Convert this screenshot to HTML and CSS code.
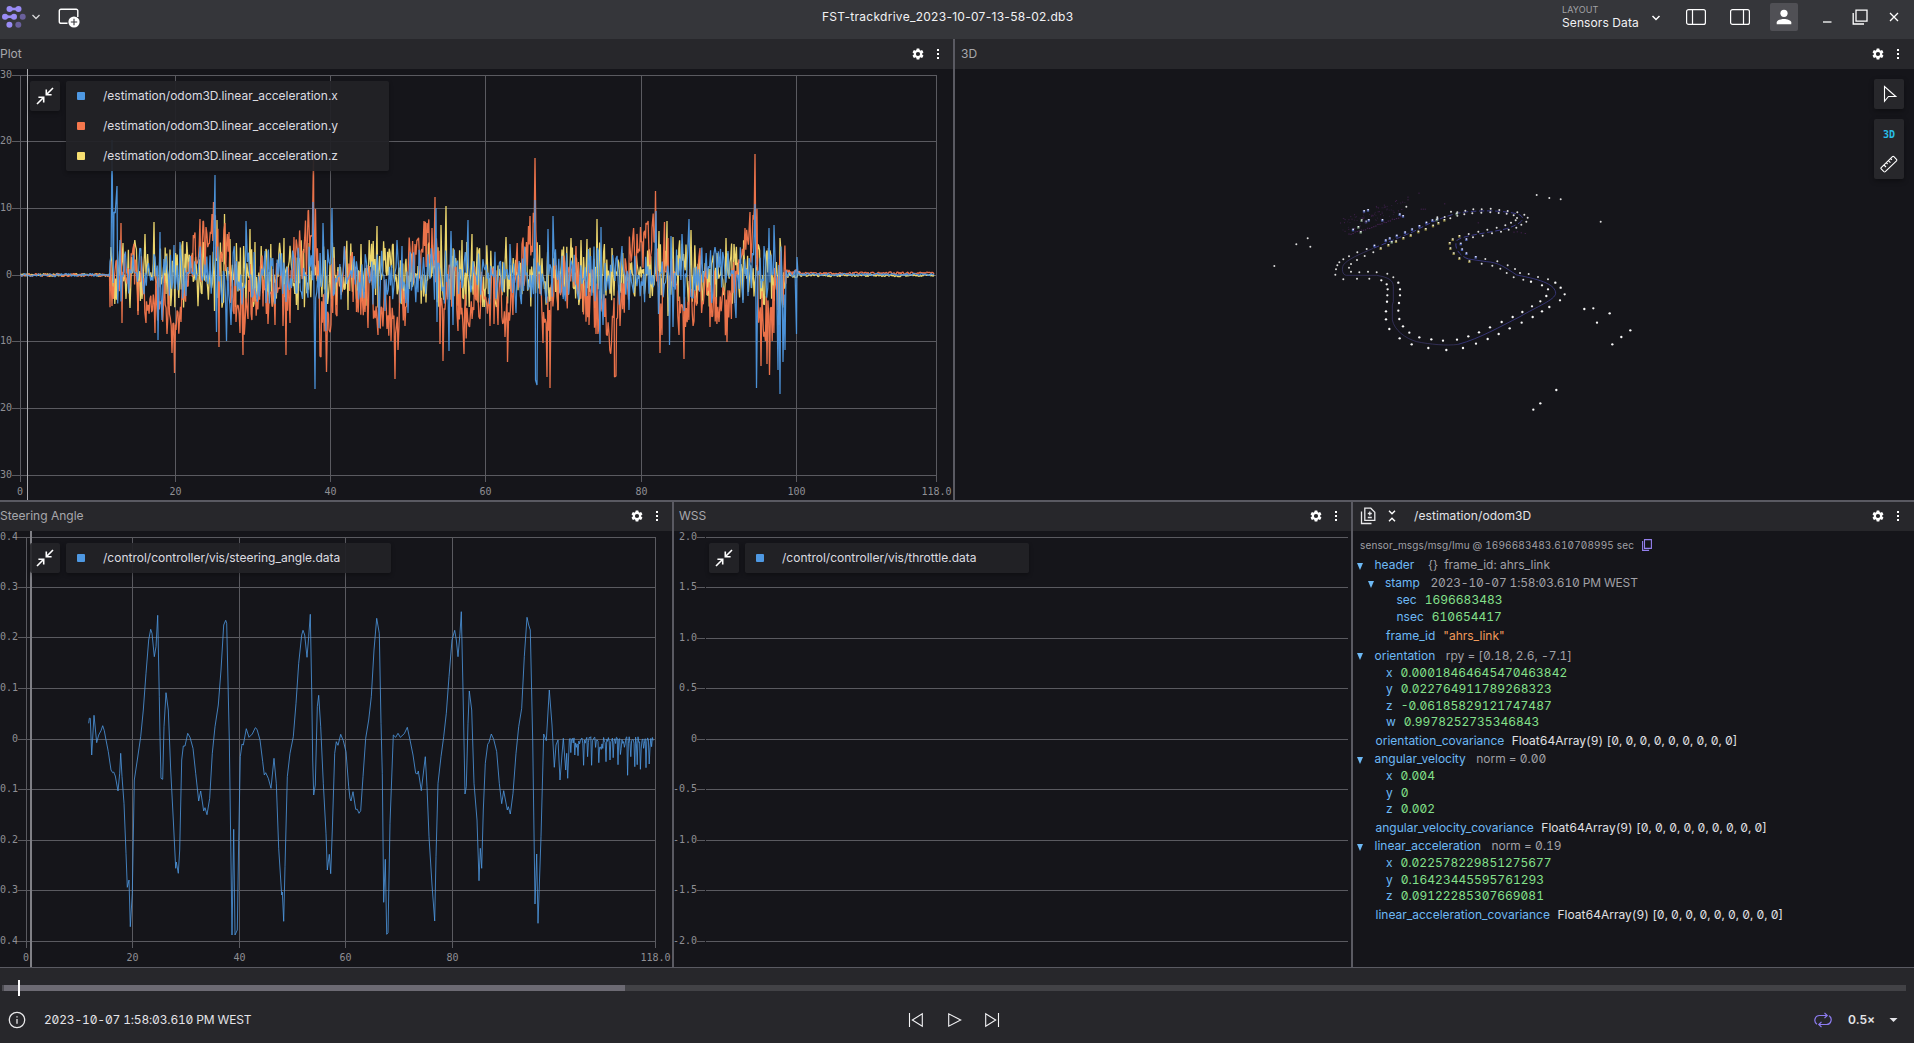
FILE: index.html
```html
<!DOCTYPE html>
<html lang="en">
<head>
<meta charset="utf-8">
<title>FST-trackdrive_2023-10-07-13-58-02.db3</title>
<link rel="stylesheet" href="styles.css">
</head>
<body>
<svg class="defs" aria-hidden="true">
  <symbol id="gear" viewBox="0 0 24 24"><path fill="currentColor" fill-rule="evenodd" d="M19.14 12.94c.04-.3.06-.61.06-.94s-.02-.64-.07-.94l2.03-1.58a.49.49 0 0 0 .12-.61l-1.92-3.32a.49.49 0 0 0-.59-.22l-2.39.96c-.5-.38-1.03-.7-1.62-.94l-.36-2.54a.48.48 0 0 0-.48-.41h-3.84a.47.47 0 0 0-.47.41l-.36 2.54c-.59.24-1.13.57-1.62.94l-2.39-.96a.48.48 0 0 0-.59.22L2.74 8.87a.48.48 0 0 0 .12.61l2.03 1.58c-.05.3-.09.63-.09.94s.02.64.07.94l-2.03 1.58a.49.49 0 0 0-.12.61l1.92 3.32c.12.22.37.29.59.22l2.39-.96c.5.38 1.03.7 1.62.94l.36 2.54c.05.24.24.41.48.41h3.84c.24 0 .44-.17.47-.41l.36-2.54c.59-.24 1.13-.56 1.62-.94l2.39.96c.22.08.47 0 .59-.22l1.92-3.32a.48.48 0 0 0-.12-.61zM12 15.6a3.6 3.6 0 1 1 0-7.2 3.6 3.6 0 0 1 0 7.2z"/></symbol>
  <symbol id="dots" viewBox="0 0 14 14"><path fill="currentColor" d="M6 2h2v2H6zM6 6h2v2H6zM6 10h2v2H6z"/></symbol>
  <symbol id="shrink" viewBox="0 0 18 18"><path fill="none" stroke="currentColor" stroke-width="1.6" d="M17 1l-6.500 6.500M10.300 2.600v5.100h5.300M1 17l6.500-6.500M2.400 10.300h5.300v5.300"/></symbol>
</svg>

<div class="app">
  <header class="appbar">
    <svg class="logo" viewBox="0 0 26 24">
      <g fill="#6a609c"><circle cx="22.700" cy="11.800" r="3"/><circle cx="18.300" cy="19.800" r="3"/></g>
      <g fill="#9a8cf5"><circle cx="9.500" cy="4" r="3"/><circle cx="18.500" cy="4" r="3"/><path d="M9.500 1.500q4.500 2.500 9 0v5q-4.500-2.500-9 0z"/><circle cx="5" cy="11.800" r="3"/><circle cx="14" cy="11.800" r="3"/><path d="M5 9.300q4.500 2.500 9 0v5q-4.500-2.500-9 0z"/><circle cx="9.400" cy="19.800" r="3"/></g>
    </svg>
    <svg class="chev logo-chev" viewBox="0 0 10 8"><path d="M1.500 2l3.500 3.500L8.500 2"/></svg>
    <svg class="add-panel" viewBox="0 0 22 20"><path d="M9.500 15.300H3A1.600 1.600 0 0 1 1.300 13.700V2.800A1.600 1.600 0 0 1 2.900 1.200h15.300a1.600 1.600 0 0 1 1.600 1.600V9" fill="none" stroke="#fff" stroke-width="1.400"/><circle cx="16" cy="14" r="5.600" fill="#fff"/><path d="M16 10.800v6.400M12.800 14h6.400" stroke="#35363a" stroke-width="1.100"/></svg>
    <h1 class="title">FST-trackdrive_2023-10-07-13-58-02.db3</h1>
    <div class="layout-menu"><small>LAYOUT</small><span>Sensors Data</span></div>
    <svg class="chev layout-chev" viewBox="0 0 10 8"><path d="M1.500 2l3.500 3.500L8.500 2"/></svg>
    <svg class="side-left" viewBox="0 0 20 16"><rect x=".6" y=".6" width="18.800" height="14.800" rx="2"/><path d="M6.500 .6v14.800"/></svg>
    <svg class="side-right" viewBox="0 0 20 16"><rect x=".6" y=".6" width="18.800" height="14.800" rx="2"/><path d="M13.500 .6v14.800"/></svg>
    <div class="avatar"><svg viewBox="0 0 16 16"><circle cx="8" cy="4.300" r="3.600"/><path d="M.7 15.200v-1.700C.7 11.200 5 10 8 10s7.300 1.200 7.300 3.500v1.700z"/></svg></div>
    <svg class="win win-min" viewBox="0 0 16 16"><path d="M4 13h8.500"/></svg>
    <svg class="win win-max" viewBox="0 0 16 16"><path d="M4 1.200h11v11H4zM1.200 4v11H12"/></svg>
    <svg class="win win-close" viewBox="0 0 16 16"><path d="M4 4l8 8M12 4l-8 8"/></svg>
  </header>

  <main class="mosaic">
    <div class="row row-top">
      <section class="panel plot-panel">
        <div class="toolbar"><h2>Plot</h2><svg class="tool"><use href="#gear"/></svg><svg class="tool"><use href="#dots"/></svg></div>
        <div class="body">
          <svg class="chart" id="accel" viewBox="0 69 953 431"></svg>
          <div class="overlay">
            <button class="shrink"><svg><use href="#shrink"/></svg></button>
            <ul class="legend legend-accel">
              <li><i class="blue"></i>/estimation/odom3D.linear_acceleration.x</li>
              <li><i class="orange"></i>/estimation/odom3D.linear_acceleration.y</li>
              <li><i class="yellow"></i>/estimation/odom3D.linear_acceleration.z</li>
            </ul>
          </div>
        </div>
      </section>
      <section class="panel scene-panel">
        <div class="toolbar padded"><h2>3D</h2><svg class="tool"><use href="#gear"/></svg><svg class="tool"><use href="#dots"/></svg></div>
        <div class="body">
          <svg class="chart" id="scene" viewBox="955 69 959 431"></svg>
          <div class="scene-tools">
            <button class="chip"><svg viewBox="0 0 18 18"><path d="M4.500 1.500v14.800l4-4.800h7.300z"/></svg></button>
            <div class="chip-group">
              <button class="mode">3D</button>
              <button><svg viewBox="0 0 18 18"><path d="M1.200 12.600L12.400 1.700q.8-.6 1.500 0l2.600 2.700q.6.7 0 1.400L5.300 16.700q-.7.6-1.400 0L1.200 14q-.6-.7 0-1.400zM4 10l2 2M6.300 7.700L7.600 9M8.400 5.600l2 2M10.600 3.500l1.300 1.300"/></svg></button>
            </div>
          </div>
        </div>
      </section>
    </div>

    <div class="row row-bottom">
      <section class="panel steer-panel">
        <div class="toolbar"><h2>Steering Angle</h2><svg class="tool"><use href="#gear"/></svg><svg class="tool"><use href="#dots"/></svg></div>
        <div class="body">
          <svg class="chart" id="steer" viewBox="0 531 672 436"></svg>
          <div class="overlay">
            <button class="shrink"><svg><use href="#shrink"/></svg></button>
            <ul class="legend legend-steer"><li><i class="blue"></i>/control/controller/vis/steering_angle.data</li></ul>
          </div>
        </div>
      </section>
      <section class="panel wss-panel">
        <div class="toolbar padded"><h2>WSS</h2><svg class="tool"><use href="#gear"/></svg><svg class="tool"><use href="#dots"/></svg></div>
        <div class="body">
          <svg class="chart" id="wss" viewBox="674 531 677 436"></svg>
          <div class="overlay overlay-wss">
            <button class="shrink"><svg><use href="#shrink"/></svg></button>
            <ul class="legend legend-wss"><li><i class="blue"></i>/control/controller/vis/throttle.data</li></ul>
          </div>
        </div>
      </section>
      <section class="panel raw-panel">
        <div class="toolbar raw-toolbar">
          <svg class="diff" viewBox="0 0 16 18"><path d="M4.800 1.200h6l4 4v8.200h-10zM1.500 4.500v12h10M9.800 4.500v4M7.800 6.500h4M7.800 10.500h4"/></svg>
          <svg class="fold" viewBox="0 0 8 12"><path d="M1 .8l3 3 3-3M1 11.200l3-3 3 3"/></svg>
          <h2 class="topic">/estimation/odom3D</h2><svg class="tool"><use href="#gear"/></svg><svg class="tool"><use href="#dots"/></svg>
        </div>
        <div class="body raw">
          <div class="meta">sensor_msgs/msg/Imu @ 1696683483.610708995 sec<svg viewBox="0 0 10 12"><path d="M2.500 .6h6.900v8.800H2.500zM.6 2v9.400h6.500"/></svg></div>
          <div class="node"><b></b><span>header</span><em class="wide">{}&nbsp; frame_id: ahrs_link</em></div>
          <div class="node in1"><b></b><span>stamp</span><em class="time">2023-10-07 1:58:03.610 PM WEST</em></div>
          <div class="leaf in2"><span>sec</span><var>1696683483</var></div>
          <div class="leaf in2"><span>nsec</span><var>610654417</var></div>
          <div class="field in1"><span>frame_id</span><q>"ahrs_link"</q></div>
          <div class="node after"><b></b><span>orientation</span><em>rpy = [0.18, 2.6, -7.1]</em></div>
          <div class="leaf in1"><span>x</span><var>0.00018464645470463842</var></div>
          <div class="leaf in1"><span>y</span><var>0.022764911789268323</var></div>
          <div class="leaf in1"><span>z</span><var>-0.06185829121747487</var></div>
          <div class="leaf in1"><span>w</span><var>0.9978252735346843</var></div>
          <div class="field"><span>orientation_covariance</span><s>Float64Array(9) [0, 0, 0, 0, 0, 0, 0, 0, 0]</s></div>
          <div class="node"><b></b><span>angular_velocity</span><em>norm = 0.00</em></div>
          <div class="leaf in1"><span>x</span><var>0.004</var></div>
          <div class="leaf in1"><span>y</span><var>0</var></div>
          <div class="leaf in1"><span>z</span><var>0.002</var></div>
          <div class="field"><span>angular_velocity_covariance</span><s>Float64Array(9) [0, 0, 0, 0, 0, 0, 0, 0, 0]</s></div>
          <div class="node"><b></b><span>linear_acceleration</span><em>norm = 0.19</em></div>
          <div class="leaf in1"><span>x</span><var>0.022578229851275677</var></div>
          <div class="leaf in1"><span>y</span><var>0.16423445595761293</var></div>
          <div class="leaf in1"><span>z</span><var>0.09122285307669081</var></div>
          <div class="field"><span>linear_acceleration_covariance</span><s>Float64Array(9) [0, 0, 0, 0, 0, 0, 0, 0, 0]</s></div>
        </div>
      </section>
    </div>
  </main>

  <footer class="playback">
    <div class="scrub"><div class="loaded"></div><div class="head"></div></div>
    <div class="controls">
      <div class="when">
        <svg class="info" viewBox="0 0 18 18"><circle cx="9" cy="9" r="7.700"/><path d="M9 8v4.800M9 5.200v1.400"/></svg>
        <span class="time">2023-10-07 1:58:03.610 PM WEST</span>
      </div>
      <div class="transport">
        <svg viewBox="0 0 14 14"><path d="M.5 0v14M13.300 .8v12.400L3.300 7z"/></svg>
        <svg viewBox="0 0 14 14"><path d="M1.700 .8v12.400L13.700 7z"/></svg>
        <svg viewBox="0 0 14 14"><path d="M13.500 0v14M.7 .8v12.400L10.700 7z"/></svg>
      </div>
      <div class="speed">
        <svg class="loop" viewBox="0 0 18 16"><path d="M3 12.300A4.800 4.800 0 0 1 5.500 3.500H13M10.500 .8L13.200 3.500l-2.700 2.700M15 3.700A4.800 4.800 0 0 1 12.500 12.500H5M7.500 9.800L4.800 12.500l2.700 2.700"/></svg>
        <strong>0.5×</strong>
        <svg class="caret" viewBox="0 0 10 5"><path d="M0 0h10L5 5z"/></svg>
      </div>
    </div>
  </footer>
</div>
<script src="charts.js"></script>
</body>
</html>
```
FILE: styles.css
```css
* { box-sizing: border-box; }
body {
  margin: 0;
  width: 1914px;
  height: 1043px;
  overflow: hidden;
  background: #15151a;
  color: #e4e4e8;
  font: 12px/16px Inter, "Noto Sans", sans-serif;
}
svg { display: block; flex: none; }
h1, h2, ul { margin: 0; padding: 0; font-weight: 400; font-size: 12px; }
button { border: 0; padding: 0; background: none; color: #fff; font: inherit; display: grid; place-items: center; }
.defs { position: absolute; width: 0; height: 0; }
.app { height: 1043px; display: grid; grid-template-rows: 39px 928px 76px; }

.appbar { display: flex; align-items: flex-start; background: #35363a; color: #f2f2f4; }
.logo { width: 26px; height: 24px; margin: 5px 0 0 0; }
.chev { width: 10px; height: 8px; fill: none; stroke: #d8d8da; stroke-width: 1.3; }
.logo-chev { margin: 13px 0 0 5px; }
.add-panel { width: 22px; height: 20px; margin: 8px 0 0 17px; }
.title { width: 256px; margin: 9px 0 0 742px; text-align: left; white-space: nowrap; letter-spacing: .28px; }
.layout-menu { width: 80px; margin: 4px 0 0 484px; display: flex; flex-direction: column; white-space: nowrap; letter-spacing: .1px; }
.layout-menu small { font-size: 9px; line-height: 11px; color: #a2a2a6; letter-spacing: .1px; }
.layout-menu span { line-height: 16px; }
.layout-chev { margin: 14px 0 0 9px; stroke: #fff; stroke-width: 1.5; }
.side-left, .side-right { width: 20px; height: 16px; fill: none; stroke: #fff; stroke-width: 1.2; margin: 9px 0 0 25px; }
.side-right { margin-left: 24px; }
.avatar { width: 28px; height: 28px; margin: 3px 0 0 20px; border-radius: 2px; background: #505055; display: grid; place-items: center; }
.avatar svg { width: 16px; height: 16px; fill: #fff; }
.win { width: 16px; height: 16px; margin-top: 9px; fill: none; stroke: #fff; stroke-width: 1.3; }
.win-min { margin-left: 21px; }
.win-max { margin-left: 17px; }
.win-close { margin-left: 18px; }

.mosaic { display: grid; grid-template-rows: 461px 465px; gap: 2px; background: #5a5a62; }
.row { display: grid; gap: 2px; }
.row-top { grid-template-columns: 953px 959px; }
.row-bottom { grid-template-columns: 672px 677px 561px; }
.panel { display: flex; flex-direction: column; background: #15151a; overflow: hidden; }
.toolbar { flex: none; height: 30px; display: flex; align-items: center; background: #27272b; padding-right: 8px; }
.row-bottom .toolbar { height: 29px; padding-bottom: 1px; }
.toolbar h2 { flex: 1; color: #a7a7ac; }
.toolbar.padded { padding-left: 6px; padding-right: 9px; }
.wss-panel .toolbar.padded { padding-left: 5px; padding-right: 8px; }
.tool { width: 14px; height: 14px; margin-left: 6px; color: #fff; }
.body { flex: 1; position: relative; }
.chart { width: 100%; height: 100%; }
.overlay { position: absolute; left: 30px; top: 12px; display: flex; align-items: flex-start; gap: 6px; }
.overlay-wss { left: 35px; }
.shrink { width: 30px; height: 30px; border-radius: 2px; background: rgba(36, 36, 40, .9); box-shadow: 0 2px 4px rgba(0, 0, 0, .3); }
.shrink svg { width: 18px; height: 18px; }
.legend { list-style: none; border-radius: 2px; background: rgba(34, 34, 38, .94); box-shadow: 0 2px 4px rgba(0, 0, 0, .3); color: #dcdce0; }
.legend li { height: 30px; display: flex; align-items: center; white-space: nowrap; }
.legend i { width: 8px; height: 8px; margin: 0 18px 0 11px; border-radius: 1px; }
.legend-accel { width: 323px; }
.legend-steer { width: 325px; }
.legend-wss { width: 284px; }
.blue { background: #4e98e2; }
.orange { background: #f5774d; }
.yellow { background: #f7df71; }
.scene-tools { position: absolute; right: 10px; top: 10px; display: flex; flex-direction: column; gap: 10px; }
.scene-tools button { width: 30px; height: 30px; }
.scene-tools svg { width: 18px; height: 18px; fill: none; stroke: #fff; stroke-width: 1.1; }
.chip, .chip-group { border-radius: 2px; box-shadow: 0 2px 5px rgba(0, 0, 0, .35); }
.scene-tools .chip, .chip-group { background: #27272b; }
.chip-group { height: 60px; }
.scene-tools .mode { color: #29bee7; font: bold 10px "DejaVu Sans Mono", monospace; }

.grid-line { stroke: #5a5a60; stroke-width: 1; shape-rendering: crispEdges; }
.tick-text { fill: #8f8f94; font: 10px "DejaVu Sans Mono", "Liberation Mono", monospace; }
.series { fill: none; stroke-linejoin: bevel; }

.raw-toolbar { padding-right: 9px; }
.toolbar .topic { color: #e4e4e8; margin-left: 18px; letter-spacing: .1px; }
.diff { width: 16px; height: 18px; margin-left: 7px; fill: none; stroke: #e8e8ea; stroke-width: 1.3; }
.fold { width: 8px; height: 12px; margin-left: 12px; fill: none; stroke: #fff; stroke-width: 1.4; }
.raw { padding-top: 6.5px; white-space: nowrap; font-feature-settings: "zero", "tnum"; }
.meta { height: 14px; line-height: 14px; padding-left: 7px; margin-bottom: 4.5px; font-size: 10px; letter-spacing: .14px; color: #a0a0a6; display: flex; align-items: center; }
.meta svg { width: 10px; height: 12px; margin-left: 8px; fill: none; stroke: #9480ed; stroke-width: 1.1; }
.node, .field, .leaf { display: flex; align-items: center; height: 18px; padding-left: 22.5px; color: #6db9f5; }
.leaf { height: 16.5px; }
.field { margin-top: 1.5px; }
.after { margin-top: 2px; }
.in1 { padding-left: 33px; }
.in2 { padding-left: 43.5px; }
.node b { width: 0; margin: 2px 11.5px 0 -18.5px; border: solid transparent; border-width: 7px 3.5px 0; border-top-color: #6db9f5; }
.raw em, .raw var, .raw q, .raw s { font-style: normal; text-decoration: none; margin-left: 8px; }
.raw em { color: #a0a0a6; margin-left: 10.5px; letter-spacing: -.03px; }
.raw em.wide { margin-left: 14px; letter-spacing: 0; }
.raw var { color: #84e08b; }
.raw q { color: #f09a5b; quotes: none; }
.raw s { color: #e0e0e4; margin-left: 7.5px; }
.time, .raw em.time { letter-spacing: -.17px; }

.playback { border-top: 1px solid #5a5a62; background: #27272b; display: flex; flex-direction: column; }
.scrub { position: relative; height: 6px; margin: 17px 8px 0 2px; background: #424246; }
.loaded { width: 623px; height: 6px; background: #6c6a73; border-left: 2px solid #4a4a50; }
.head { position: absolute; left: 16px; top: -5px; width: 2px; height: 16px; background: #fff; }
.controls { flex: 1; display: grid; grid-template-columns: 1fr 90px 1fr; align-items: center; padding-top: 6px; }
.when { display: flex; align-items: center; gap: 18px; padding-left: 8px; font-feature-settings: "zero", "tnum"; }
.info { width: 18px; height: 18px; fill: none; stroke: #e8e8ea; stroke-width: 1.3; }
.transport { display: flex; justify-content: space-between; width: 90px; margin-left: -3px; }
.transport svg { width: 14px; height: 14px; fill: none; stroke: #f4f4f6; stroke-width: 1.1; overflow: visible; }
.speed { display: flex; align-items: center; justify-content: flex-end; padding-right: 16px; }
.loop { width: 18px; height: 16px; fill: none; stroke: #8d7cf0; stroke-width: 1.2; margin-right: 16px; }
.speed strong { font-weight: 600; }
.caret { width: 9px; height: 4px; fill: #e4e4e8; margin-left: 14px; }
```
FILE: charts.js
```js
const NS = "http://www.w3.org/2000/svg";

function add(svg, tag, attrs, text) {
  const el = document.createElementNS(NS, tag);
  for (const k in attrs) el.setAttribute(k, attrs[k]);
  if (text !== undefined) el.textContent = text;
  svg.appendChild(el);
  return el;
}
function line(svg, x1, y1, x2, y2) {
  add(svg, "line", { x1, y1, x2, y2, class: "grid-line" });
}
function label(svg, x, y, text, anchor) {
  add(svg, "text", { x, y: y + 3.5, "text-anchor": anchor, class: "tick-text" }, text);
}
function series(svg, pts, color, opacity, width) {
  add(svg, "polyline", { points: pts.map(p => p[0].toFixed(1) + "," + p[1].toFixed(1)).join(" "), class: "series", stroke: color, "stroke-opacity": opacity, "stroke-width": width });
}
function random(seed) {
  return () => {
    seed = (seed * 1664525 + 1013904223) % 4294967296;
    return seed / 4294967296;
  };
}
function frame(svg, o) {
  o.ys.forEach(([y, text]) => {
    line(svg, o.labelX, y, o.x0, y);
    line(svg, o.x0 + (o.split || 0), y, o.x1, y);
    label(svg, o.labelX, y - 1, text, "end");
  });
  (o.xs || []).forEach(([x, text]) => {
    line(svg, x, o.ys[0][0], x, o.bottom);
    label(svg, x === o.x0 ? x - 0.5 : x, o.textY, text, "middle");
  });
}
function lerp(keys, x) {
  let i = 1;
  while (i < keys.length - 1 && keys[i][0] < x) i++;
  const [a, b] = [keys[i - 1], keys[i]];
  const t = Math.min(1, Math.max(0, (x - a[0]) / (b[0] - a[0])));
  return a[1] + (b[1] - a[1]) * t;
}

/* Linear acceleration */
const accel = document.getElementById("accel");
frame(accel, {
  x0: 20.5, x1: 936.5, labelX: 12, bottom: 482, textY: 491.5,
  ys: [[75.5, "30"], [141.5, "20"], [208.5, "10"], [275.5, "0"], [341.5, "-10"], [408.5, "-20"], [475.5, "-30"]],
  xs: [[20.5, "0"], [175.5, "20"], [330.5, "40"], [485.5, "60"], [641.5, "80"], [796.5, "100"], [936.5, "118.0"]]
});

function noisy(seed, mean, up, down, spikes, idle, step) {
  const r = random(seed), pts = [];
  for (let x = 20.5; x < 110; x += 1) pts.push([x, 275 + (r() - 0.5) * 3]);
  for (let x = 110; x < 786; x += step) {
    const q = r() * 2 - 1;
    const amp = q < 0 ? -up : down;
    pts.push([x, lerp(mean, x) + Math.pow(Math.abs(q), 1.5) * amp]);
  }
  for (let x = 786; x < 800; x += 1) pts.push([x, idle - 1 + (r() - 0.5) * 7]);
  for (let x = 800; x < 935; x += 1) pts.push([x, idle + (r() - 0.5) * 2.4]);
  spikes.forEach(([x, y]) => {
    let best = 0;
    pts.forEach((p, i) => { if (Math.abs(p[0] - x) < Math.abs(pts[best][0] - x)) best = i; });
    pts[best] = [x, y];
  });
  return pts;
}
const flat = [[110, 275], [786, 275]];
const zSpikes = [[111,247],[123,243],[130,308],[138,311],[145,234],[154,222],[202,294],[214.5,311],[217,220],[224.5,214],[230,239],[250,229],[255,242],[266,249],[284,238],[298,310],[334,247],[348,310],[361,244],[377,226],[385,248],[441,225],[446,206],[462,240],[472,234],[506,237],[526,247],[558,310],[571,238],[581,240],[583,312],[587,239],[597,219],[612,248],[659,231],[667,221],[668,316],[673,237],[691,230],[717,253],[726,238],[734,244],[744,253],[779,325],[780,238]];
const ySpikes = [[112,306],[122,323],[121,223],[134,244],[138,315],[146,323],[155,333],[167,334],[172,353],[174.5,373],[176,330],[181,322],[194,238],[200,219],[203,221],[206,227],[212,214],[213.5,202],[219,347],[225,223],[229,232],[236,322],[240,333],[243,355],[248,319],[268,324],[275,325],[283,326],[286,355],[290,323],[294,237],[305,232],[308.5,210],[313.5,156],[315.5,209],[320,356],[321,357],[326.5,372],[329,330],[336,314],[368,328],[378,335],[387,329],[391,341],[395,379],[398,350],[405,326],[415,244],[418,239],[424,221],[427,223],[432,228],[435,197],[440,344],[443,361],[458,331],[464,354],[469,326],[480,319],[490,326],[494,324],[498,325],[505,337],[507.5,362],[522,244],[528.5,226],[530,216],[535,158],[543,343],[547,377],[550,388],[576,246],[589,325],[596,334],[609,333],[614.5,377],[616,376],[630,247],[640.500,227],[646,223],[652,228],[655.500,191],[660,353],[662,335],[664.500,222],[668,238],[679,335],[684,359],[700,248],[710,327],[719,322],[727,342],[745,228],[750,212],[753,215],[755,154],[757,209],[761,366],[767,364],[769.500,375],[778,310],[781,251]];
const xSpikes = [[112,140],[114,212],[115.200,213],[117,186],[120,240],[158,340],[162,320],[160,232],[174,245],[180,242],[215,175],[216.500,332],[226.500,341],[231,325],[246,221],[266,303],[313,202],[315,389],[323,223],[326,331],[332,208],[379,328],[385,311],[397,240],[402,246],[408,313],[436,208],[437,322],[449,351],[451,231],[453,325],[468,220],[516,313],[510,244],[535,200],[535.500,380],[537,385],[548,229],[553,216],[600,344],[601,227],[603,325],[622,246],[629,310],[656,211],[658.500,314],[669.500,345],[671,236],[673,327],[682,234],[684,311],[689,219],[728,251],[736,318],[743,303],[755,204],[756.500,388],[764,246],[769,228],[774,225],[778,370],[780,394],[783,362],[785,350],[796.500,334],[797,257]];
const yMean = [[110,278],[130,280],[150,288],[164,300],[174,325],[182,300],[192,270],[205,243],[215,240],[226,258],[236,295],[243,318],[250,290],[265,288],[285,296],[300,262],[312,235],[317,270],[326,330],[332,290],[345,278],[370,290],[395,325],[404,290],[412,258],[430,242],[437,260],[443,310],[450,280],[464,310],[475,292],[496,300],[508,315],[515,280],[525,255],[535,232],[540,295],[549,335],[555,285],[575,278],[595,305],[614,330],[623,285],[635,252],[655,238],[660,310],[666,270],[684,310],[700,285],[727,305],[735,275],[745,250],[755,240],[760,315],[770,330],[777,280],[786,275]];
series(accel, noisy(11, flat, 35, 33, zSpikes, 275.5, 0.8), "#f7df71", 0.95, 1.3);
series(accel, noisy(29, yMean, 33, 32, ySpikes, 273.200, 0.85), "#f5774d", 0.95, 1.3);
series(accel, noisy(73, flat, 29, 30, xSpikes, 274.5, 1.1), "#4e98e2", 0.95, 1.25);
add(accel, "rect", { x: 27, y: 69, width: 1, height: 431, fill: "#aaaaae" });

/* Steering angle */
const steer = document.getElementById("steer");
frame(steer, {
  x0: 26.5, x1: 655.5, labelX: 18, bottom: 948, textY: 957.5,
  ys: [[537.5, "0.4"], [587.5, "0.3"], [637.5, "0.2"], [688.5, "0.1"], [739.5, "0"], [789.5, "-0.1"], [840.5, "-0.2"], [890.5, "-0.3"], [941.5, "-0.4"]],
  xs: [[26.5, "0"], [132.5, "20"], [239.5, "40"], [345.5, "60"], [452.5, "80"], [655.5, "118.0"]]
});
const lapA = [266,550,268,535,271,535,275,645,282,526,290,608,296,585,303,572,308,557,313,572,318,600,325,635,333,690,338,698,341,696,346,708,354,753,359,700,362,640,366,710,372,790,378,940,382,1042,387,1020,391,1160,397,1060,403,720,412,660,422,590,430,510,438,400,446,300,452,268,456,280,463,350,468,320,473,226,478,470,480,590,483,715,488,718,492,560,498,458,505,510,512,690,520,840,527,985,529,966,535,1000,539,930,545,660,550,618,555,618,563,580,570,592,579,625,587,700,596,783,602,753,611,813,615,803,621,824,629,775,637,640,645,560,655,495,663,390,671,255,677,241,680,250,688,600,692,900,696,1185,701,868,705,1185,712,1170,716,900,721,650,726,612,730,615,739,566,747,592,757,582,766,563,771,568,780,600,788,665,793,705,797,698,805,715,813,745,822,655,829,730,836,925,845,1065,847,1056,851,1144,855,980,862,710,870,640,880,590,888,490,896,370,905,285,909,271,914,285,921,352,926,290,931,223,935,450,938,660,941,765,946,735,952,500,956,466,962,560,970,730,978,880,982,990,988,943,992,1001,997,870,1004,640,1009,605,1014,616,1022,583,1030,602,1038,635,1046,740,1050,775];
const lapB = [33,933,39,905,47,958,52,958,57,970,62,962,69,860,77,745,86,690,94,620,102,480,110,385,118,430,123,700,127,850,131,1237,136,1108,140,1333,144,1328,150,1000,160,735,167,742,174,730,181,742,193,731,202,712,210,750,219,795,227,850,232,852,235,843,244,902,256,800,261,890,267,1040,276,1185,284,1293,288,1100,294,880,303,800,311,740,319,670,327,560,336,450,344,421,349,450,354,500,360,430,364,365,369,600,375,912,379,890,384,700,388,603,395,660,402,880,411,990,417,1172,421,1075,425,1135,430,960,436,820,443,763,447,757,454,732,461,748,470,785,478,880,485,941,491,902,502,960,505,950,511,972,519,910,528,790,536,710,545,655,553,500,561,382,566,405,571,420,578,750,585,1242,590,1092,594,1300,603,1040,611,732,619,752,628,600,636,705,643,832,648,765,654,750,660,870,670,745,677,840,680,790,683,865,688,750];
const tail = [702,795,713,797,730,826,742,800,754,826,776,818,797,815,809,810,819,803,832,824,842,775,853,772,861,856,870,800,882,830,890,824,901,838,909,775,917,833,926,822,933,770];
const steering = [];
for (let i = 0; i < lapA.length; i += 2) steering.push([lapA[i] / 3, 540 + lapA[i + 1] / 3]);
for (let i = 0; i < lapB.length; i += 2) steering.push([340 + lapB[i] / 3, 490 + lapB[i + 1] / 3]);
const rt = random(5);
let next = 0;
for (let x = 690; x < 940; x += 2.4) {
  let y = 740 + rt() * 22;
  if (rt() > 0.8) y = 770 + rt() * 25;
  if (next < tail.length && x >= tail[next]) {
    y = tail[next + 1];
    next += 2;
  }
  steering.push([340 + x / 3, 490 + y / 3]);
}
series(steer, steering, "#4e98e2", 0.8, 1);
add(steer, "rect", { x: 30, y: 531, width: 2, height: 436, fill: "#808086" });

/* Wheel speed */
const wss = document.getElementById("wss");
frame(wss, {
  x0: 705, x1: 1348, split: 1, labelX: 697, bottom: 948, textY: 958,
  ys: [[537.5, "2.0"], [587.5, "1.5"], [638.5, "1.0"], [688.5, "0.5"], [739.5, "0"], [789.5, "-0.5"], [840.5, "-1.0"], [890.5, "-1.5"], [941.5, "-2.0"]]
});

/* Track scene: cones and centre line */
const scene = document.getElementById("scene");
const track = add(scene, "g", { transform: "translate(1260 180) scale(.33333)" });
[
  ["M340 205C300 222 262 238 250 255C245 265 246 286 260 286H350C385 292 400 300 400 320V365L397 375V420C403 450 435 475 470 485C510 493 560 498 595 493", "#36335f", ""],
  ["M595 493C660 475 720 440 780 410C830 380 885 360 887 340C886 315 850 300 770 285C735 262 715 247 680 245L625 237", "#3b3a86", ""],
  ["M625 237C592 225 580 195 592 180C615 165 680 160 740 146C780 132 800 118 780 105C755 95 700 90 640 94C580 96 530 118 460 155L340 205", "#4543a0", "16 8"]
].forEach(([d, stroke, dash]) => add(track, "path", { d, stroke, fill: "none", "stroke-width": 2.5, "stroke-dasharray": dash }));

const white = [43,258,109,193,143,175,151,200,830,45,868,54,902,58,1022,125,973,387,1000,385,1049,400,1011,428,1111,451,1084,471,1057,493,889,630,841,670,820,689,439,80,320,207,340,217,292,217,314,228,267,229,291,240,250,238,238,247,273,252,232,256,228,268,267,263,226,284,273,275,298,277,324,275,350,277,250,298,291,296,328,296,382,281,400,292,364,301,380,313,415,308,383,328,420,328,382,346,420,346,381,365,417,369,378,394,415,392,378,418,418,417,388,447,429,439,419,475,448,458,455,493,478,472,505,504,514,478,559,510,549,482,609,504,591,479,648,491,625,469,683,477,657,457,716,462,690,442,749,445,725,426,785,428,758,411,818,411,787,396,846,394,816,379,868,381,841,364,900,361,859,348,914,343,864,328,902,323,846,316,886,308,864,298,834,291,813,305,806,282,790,299,780,279,761,292,765,267,740,279,743,256,721,266,712,244,697,257,676,237,665,251,626,162,655,155,639,172,668,167,682,149,696,160,710,143,723,155,736,136,746,149,753,128,767,121,769,143,784,134,799,125,803,113,793,104,772,97,771,114,761,106,743,93,740,101,718,90,716,99,692,86,691,97,665,88,664,98,640,88,637,100,616,92,613,103,592,97,592,107,573,95,571,115,554,111,532,112];
const gold = [362,206,385,196,408,185,430,175,452,167,475,156,497,148,519,138,535,130,553,121,578,179,598,169,569,190,571,206,581,221,598,236,628,245];
const azure = [343,198,377,182,389,176,410,168,435,158,456,149,478,139,499,129,517,122,532,118,602,192,606,209,619,221,647,232,619,179,312,94,324,91,326,121,318,126,367,121,419,104,429,109,279,150];
const green = [305,122,295,142,302,157,590,102,530,120,395,187];
function cones(list) {
  for (let i = 0; i < list.length; i += 2) {
    const far = list[i + 1] < 300;
    add(track, "circle", { cx: list[i], cy: list[i + 1], r: far ? 3 : 3.5, fill: far ? "#dcdcdc" : "#fafafa" });
  }
}
function halo(list, color) {
  for (let i = 0; i < list.length; i += 2) {
    add(track, "rect", { x: list[i] - 3.5, y: list[i + 1] - 4, width: 7, height: 8, fill: color });
    add(track, "rect", { x: list[i] - 1.5, y: list[i + 1] - 4, width: 4, height: 4, fill: "#f0f0f4" });
  }
}
cones(white);
halo(gold, "#8f8640");
halo(azure, "#4a5aa8");
halo(green, "#6d8a70");
const rs = random(21);
for (let i = 0; i < 85; i++) {
  const t = rs();
  const x = 240 + t * 195, y = 135 - t * 72 + (rs() - 0.4) * 44;
  add(track, "rect", { x, y, width: 3, height: 3, fill: rs() > 0.5 ? "#40204c" : "#2b1c38" });
}
for (let i = 0; i < 26; i++) {
  const x = 265 + i * 6.2;
  add(track, "rect", { x, y: 160 - i * 2.1 + rs() * 5, width: 4, height: 3, fill: "#4a2359" });
}
[442,50,442,58,475,38,482,86,488,86,494,86,552,70,760,155,770,154,782,157,794,159,653,127].forEach((v, i, a) => {
  if (i % 2 === 0) add(track, "rect", { x: v, y: a[i + 1], width: 4, height: 3, fill: "#40204c" });
});
```
